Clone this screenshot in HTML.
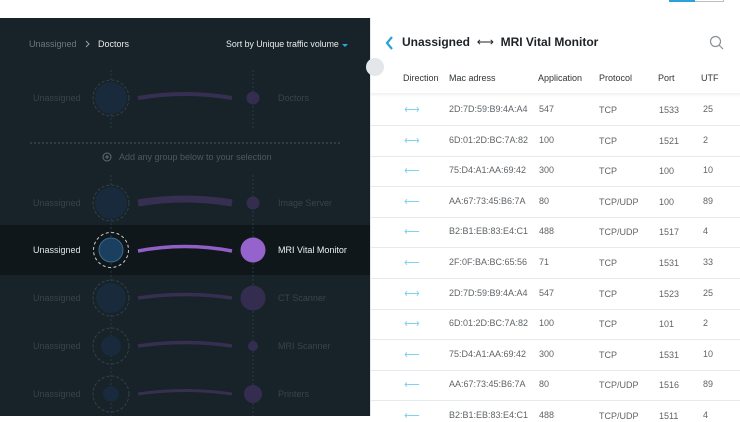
<!DOCTYPE html>
<html><head><meta charset="utf-8"><style>
*{margin:0;padding:0;box-sizing:border-box}
body{width:740px;height:416px;overflow:hidden;background:#fff;font-family:"Liberation Sans",sans-serif;position:relative}
.l{position:absolute;left:0;top:18px;width:370px;height:398px;background:#172328}
.t{position:absolute;white-space:nowrap;font-size:9px}
.r{position:absolute;left:370px;top:18px;width:370px;height:398px;background:#fff;border-left:1px solid #e3e8ec}
.row{position:absolute;left:371px;width:369px;height:1px;background:#e6eaed}
.c{position:absolute;font-size:9px;color:#5f6468;white-space:nowrap}
.h{position:absolute;font-size:9px;color:#2f3438;white-space:nowrap;top:73px}
</style></head><body>
<div style="position:absolute;left:669px;top:0;width:55px;height:2px;border:1px solid #b9c0c5;border-top:none"></div>
<div style="position:absolute;left:669px;top:0;width:26px;height:2px;background:#2aa1d8"></div>
<div class="l"></div>
<div style="position:absolute;left:0;top:225px;width:370px;height:50px;background:#0f171b"></div>
<svg style="position:absolute;left:0;top:0" width="370" height="416">
<g stroke="#2a3a44" stroke-width="1" stroke-dasharray="2 2">
<line x1="111" y1="70" x2="111" y2="130"/><line x1="253" y1="70" x2="253" y2="130"/>
<line x1="111" y1="175" x2="111" y2="416"/><line x1="253" y1="175" x2="253" y2="416"/>
</g>
<line x1="30" y1="143" x2="340" y2="143" stroke="#4a555b" stroke-dasharray="2 2"/>
<g fill="none" stroke="#33404a" stroke-dasharray="3 2">
<circle cx="111" cy="98" r="18"/><circle cx="111" cy="203" r="18"/><circle cx="111" cy="298" r="18"/><circle cx="111" cy="346" r="18"/><circle cx="111" cy="394" r="18"/>
</g>
<g fill="#182a3b">
<circle cx="111" cy="98" r="16"/><circle cx="111" cy="203" r="16"/><circle cx="111" cy="298" r="15"/><circle cx="111" cy="346" r="10"/><circle cx="111" cy="394" r="8"/>
</g>
<g fill="none" stroke="#362f52" stroke-linecap="butt">
<path d="M138 98 Q185 90 232 98" stroke-width="4"/>
<path d="M138 203 Q185 195 232 203" stroke-width="7"/>
<path d="M138 298 Q185 291 232 298" stroke-width="3.5"/>
<path d="M138 346 Q185 339 232 346" stroke-width="3.5"/>
<path d="M138 394 Q185 387 232 394" stroke-width="3"/>
</g>
<g fill="#342d50">
<circle cx="253" cy="98" r="6.5"/><circle cx="253" cy="203" r="6.5"/><circle cx="253" cy="298" r="12.5"/><circle cx="253" cy="346" r="5"/><circle cx="253" cy="394" r="9"/>
</g>
<circle cx="111" cy="250" r="17.5" fill="none" stroke="#c7cdd1" stroke-dasharray="3 2.5"/>
<circle cx="111" cy="250" r="12" fill="#1b3f5f" stroke="#3b6a8a"/>
<path d="M138 251 Q185 242 232 251" fill="none" stroke="#9160c7" stroke-width="3.5"/>
<circle cx="253" cy="250" r="12.5" fill="#9563cc"/>
<circle cx="107" cy="157" r="4" fill="none" stroke="#626c72"/>
<path d="M105 157h4M107 155v4" stroke="#626c72"/>
<path d="M342 44l3 3 3-3z" fill="#2aa7e0"/>
<path d="M86 41l3 3-3 3" fill="none" stroke="#9aa3a8"/>
</svg>
<div class="t" style="left:29px;top:39px;color:#6e787e">Unassigned</div>
<div class="t" style="left:98px;top:39px;color:#e8ecee">Doctors</div>
<div class="t" style="left:226px;top:39px;color:#e8ecee;font-size:8.8px">Sort by Unique traffic volume</div>
<div class="t" style="left:119px;top:152px;color:#4e585e">Add any group below to your selection</div>
<div class="t" style="left:33px;top:93px;color:#39444a">Unassigned</div><div class="t" style="left:278px;top:93px;color:#39444a">Doctors</div>
<div class="t" style="left:33px;top:198px;color:#39444a">Unassigned</div><div class="t" style="left:278px;top:198px;color:#39444a">Image Server</div>
<div class="t" style="left:33px;top:245px;color:#dfe4e6">Unassigned</div><div class="t" style="left:278px;top:245px;color:#eef1f2">MRI Vital Monitor</div>
<div class="t" style="left:33px;top:293px;color:#39444a">Unassigned</div><div class="t" style="left:278px;top:293px;color:#39444a">CT Scanner</div>
<div class="t" style="left:33px;top:341px;color:#39444a">Unassigned</div><div class="t" style="left:278px;top:341px;color:#39444a">MRI Scanner</div>
<div class="t" style="left:33px;top:389px;color:#39444a">Unassigned</div><div class="t" style="left:278px;top:389px;color:#39444a">Printers</div>
<div class="r"></div>
<div style="position:absolute;left:366px;top:58px;width:18px;height:18px;border-radius:50%;background:#e4e7e9"></div>
<svg style="position:absolute;left:384px;top:35px" width="12" height="16"><path d="M8 2L3 8l5 6" fill="none" stroke="#2aa1d8" stroke-width="2.2"/></svg>
<div class="t" style="left:402px;top:35px;font-size:12px;font-weight:bold;color:#1d2226">Unassigned <span style="font-weight:normal">&nbsp;⟷&nbsp;</span> MRI Vital Monitor</div>
<svg style="position:absolute;left:709px;top:35px" width="16" height="16"><circle cx="6.5" cy="6.5" r="5" fill="none" stroke="#8a9095" stroke-width="1.2"/><path d="M10 10l4 4" stroke="#8a9095" stroke-width="1.2"/></svg>
<div style="position:absolute;left:371px;top:93px;width:369px;height:4px;background:linear-gradient(#eef0f2,#fff)"></div>
<div class="h" style="left:403px">Direction</div><div class="h" style="left:449px">Mac adress</div><div class="h" style="left:538px">Application</div><div class="h" style="left:599px">Protocol</div><div class="h" style="left:658px">Port</div><div class="h" style="left:701px">UTF</div>
<div id="rows"></div>
<script>
var d=[["b","2D:7D:59:B9:4A:A4","547","TCP","1533","25"],["b","6D:01:2D:BC:7A:82","100","TCP","1521","2"],["l","75:D4:A1:AA:69:42","300","TCP","100","10"],["l","AA:67:73:45:B6:7A","80","TCP/UDP","100","89"],["l","B2:B1:EB:83:E4:C1","488","TCP/UDP","1517","4"],["l","2F:0F:BA:BC:65:56","71","TCP","1531","33"],["b","2D:7D:59:B9:4A:A4","547","TCP","1523","25"],["b","6D:01:2D:BC:7A:82","100","TCP","101","2"],["l","75:D4:A1:AA:69:42","300","TCP","1531","10"],["l","AA:67:73:45:B6:7A","80","TCP/UDP","1516","89"],["l","B2:B1:EB:83:E4:C1","488","TCP/UDP","1511","4"]];
var h="";
d.forEach(function(r,i){var y=Math.round(104+i*30.6);
h+='<div class="c" style="left:404px;top:'+(y-1)+'px;color:#7fd3ef;font-size:11px">'+(r[0]=="b"?"⟷":"⟵")+'</div>';
h+='<div class="c" style="left:449px;top:'+y+'px">'+r[1]+'</div><div class="c" style="left:539px;top:'+y+'px">'+r[2]+'</div><div class="c" style="left:599px;top:'+(y+1)+'px">'+r[3]+'</div><div class="c" style="left:659px;top:'+(y+1)+'px">'+r[4]+'</div><div class="c" style="left:703px;top:'+y+'px">'+r[5]+'</div>';
if(i<10)h+='<div class="row" style="top:'+(y+21)+'px"></div>';});
document.getElementById("rows").innerHTML=h;
</script>
</body></html>
